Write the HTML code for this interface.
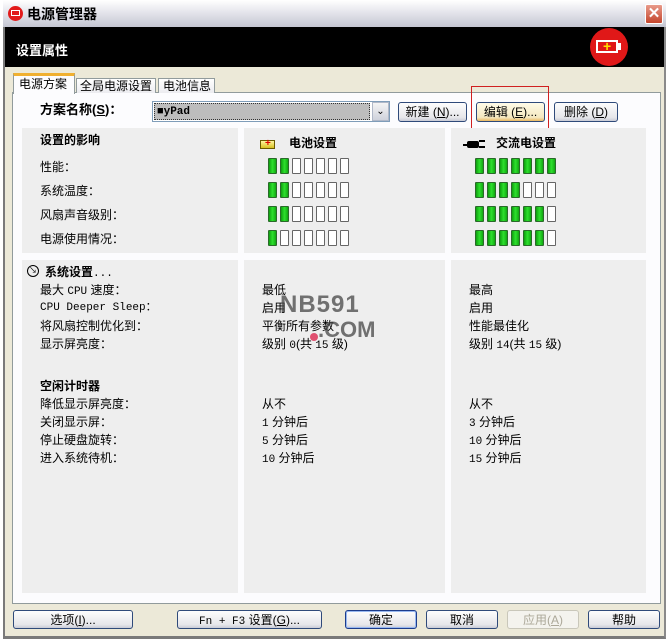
<!DOCTYPE html>
<html><head><meta charset="utf-8"><style>
*{margin:0;padding:0;box-sizing:border-box}
body{width:666px;height:639px;position:relative;overflow:hidden;background:#ece9d8;font-family:"Liberation Sans","Noto Sans CJK SC","WenQuanYi Zen Hei",sans-serif;font-size:12px;color:#000}
.a{position:absolute}
.t{position:absolute;font-size:12px;line-height:14px;white-space:nowrap}
.b{font-weight:bold}
.p{position:absolute;background:#eeeeee}
.btn{position:absolute;height:20px;border:1px solid #2f4a7a;border-radius:3px;background:linear-gradient(#fdfdfd,#e6e6ea 80%,#c9cbd6);text-align:center;line-height:18px;font-size:12px}
.bar{position:absolute;width:9px;height:16px;border:1px solid #666;border-radius:1px;background:#fff}
.g{background:linear-gradient(90deg,#0fa00f,#2ee02e 50%,#11a811);border-color:#2a6a2a}
.mono{font-family:"Liberation Mono","Noto Sans CJK SC",monospace;font-size:11px}
</style></head><body>
<div class="a" style="left:0;top:0;width:666px;height:639px;background:#fff"></div>
<div class="a" style="left:3px;top:0;width:663px;height:639px;background:#ece9d8;border-left:2px solid #7a7a7a;border-right:2px solid #8a8a8a;border-bottom:3px solid #7a7a7a"></div>
<div class="a" style="left:3px;top:0;width:663px;height:27px;background:linear-gradient(#ffffff,#e8e8ee 40%,#c4c6d2)"></div>
<div class="a" style="left:8px;top:6px;width:15px;height:15px;border-radius:50%;background:#e21b1b"></div>
<div class="a" style="left:11px;top:10px;width:9px;height:6px;border:1px solid #fff"></div>
<div class="t b" style="left:27px;top:6px;font-size:14px;line-height:16px">电源管理器</div>
<div class="a" style="left:645px;top:4px;width:18px;height:20px;background:linear-gradient(#e89a8a,#c4452c);border:1px solid #fff;border-radius:2px;color:#fff;font-size:15px;text-align:center;line-height:18px;font-weight:bold">✕</div>
<div class="a" style="left:5px;top:27px;width:659px;height:40px;background:#000"></div>
<div class="t b" style="left:16px;top:44px;color:#fff;font-size:13px">设置属性</div>
<div class="a" style="left:590px;top:28px;width:38px;height:38px;border-radius:50%;background:#e01818"></div>
<div class="a" style="left:596px;top:40px;width:22px;height:13px;border:2px solid #fff"></div>
<div class="a" style="left:618px;top:43px;width:3px;height:7px;background:#fff"></div>
<div class="t b" style="left:603px;top:39px;color:#ffe000;font-size:14px">+</div>
<div class="a" style="left:12px;top:92px;width:649px;height:512px;border:1px solid #919b9c;background:#fcfcfe"></div>
<div class="a" style="left:76px;top:78px;width:80px;height:15px;border:1px solid #919b9c;border-bottom:none;background:linear-gradient(#fff,#ececf0)"></div>
<div class="t" style="left:80px;top:79px">全局电源设置</div>
<div class="a" style="left:158px;top:78px;width:57px;height:15px;border:1px solid #919b9c;border-bottom:none;background:linear-gradient(#fff,#ececf0)"></div>
<div class="t" style="left:163px;top:79px">电池信息</div>
<div class="a" style="left:13px;top:73px;width:62px;height:21px;border:1px solid #919b9c;border-top:3px solid #f0b030;border-bottom:none;background:#fcfcfe"></div>
<div class="t" style="left:19px;top:77px">电源方案</div>
<div class="t b" style="left:40px;top:103px;font-size:13px">方案名称(<u>S</u>)：</div>
<div class="a" style="left:152px;top:101px;width:238px;height:21px;border:1px solid #7f9db9;background:#fff"></div>
<div class="a" style="left:154px;top:103px;width:216px;height:17px;background:#bdbdbd;border:1px dotted #333"></div>
<div class="t b mono" style="left:157px;top:105px">■yPad</div>
<div class="a" style="left:372px;top:102px;width:17px;height:19px;background:linear-gradient(#f4f4f4,#cfd2dc);border:1px solid #b0b8c8;text-align:center;font-size:10px;line-height:17px">⌄</div>
<div class="btn" style="left:398px;top:102px;width:69px">新建 (<u>N</u>)...</div>
<div class="btn" style="left:476px;top:102px;width:69px;background:linear-gradient(#fffbe8,#f4e8c0 80%,#e9b860)">编辑 (<u>E</u>)...</div>
<div class="btn" style="left:554px;top:102px;width:64px">删除 (<u>D</u>)</div>
<div class="a" style="left:471px;top:86px;width:78px;height:46px;border:1px solid #d02020"></div>
<div class="p" style="left:22px;top:128px;width:216px;height:125px"></div>
<div class="p" style="left:244px;top:128px;width:201px;height:125px"></div>
<div class="p" style="left:451px;top:128px;width:195px;height:125px"></div>
<div class="t b" style="left:40px;top:133px">设置的影响</div>
<div class="t" style="left:40px;top:160px">性能：</div>
<div class="t" style="left:40px;top:184px">系统温度：</div>
<div class="t" style="left:40px;top:208px">风扇声音级别：</div>
<div class="t" style="left:40px;top:232px">电源使用情况：</div>
<div class="a" style="left:260px;top:140px;width:15px;height:9px;border:1px solid #6a5a00;background:linear-gradient(#fff7a0,#d8c020)"></div>
<div class="t b" style="left:265px;top:137px;color:#d00;font-size:10px">+</div>
<div class="t b" style="left:289px;top:136px">电池设置</div>
<div class="a" style="left:467px;top:141px;width:12px;height:7px;background:#000;border-radius:2px"></div>
<div class="a" style="left:479px;top:140px;width:6px;height:2px;background:#000"></div>
<div class="a" style="left:479px;top:146px;width:6px;height:2px;background:#000"></div>
<div class="a" style="left:463px;top:144px;width:5px;height:2px;background:#000"></div>
<div class="t b" style="left:496px;top:136px">交流电设置</div>
<div id="bars"></div>
<div class="p" style="left:22px;top:260px;width:216px;height:333px"></div>
<div class="p" style="left:244px;top:260px;width:201px;height:333px"></div>
<div class="p" style="left:451px;top:260px;width:195px;height:333px"></div>
<div class="a" style="left:27px;top:265px;width:12px;height:12px;border:1px solid #000;border-radius:50%;font-size:8px;text-align:center;line-height:10px">↘</div>
<div class="t b" style="left:45px;top:265px">系统设置<span class="mono" style="font-weight:normal">...</span></div>
<div class="t" style="left:40px;top:283px">最大 <span class="mono">CPU</span> 速度：</div>
<div class="t mono" style="left:40px;top:301px">CPU Deeper Sleep：</div>
<div class="t" style="left:40px;top:319px">将风扇控制优化到：</div>
<div class="t" style="left:40px;top:337px">显示屏亮度：</div>
<div class="t b" style="left:40px;top:379px">空闲计时器</div>
<div class="t" style="left:40px;top:397px">降低显示屏亮度：</div>
<div class="t" style="left:40px;top:415px">关闭显示屏：</div>
<div class="t" style="left:40px;top:433px">停止硬盘旋转：</div>
<div class="t" style="left:40px;top:451px">进入系统待机：</div>
<div class="t" style="left:262px;top:283px">最低</div>
<div class="t" style="left:262px;top:301px">启用</div>
<div class="t" style="left:262px;top:319px">平衡所有参数</div>
<div class="t" style="left:262px;top:337px">级别 <span class="mono">0</span>(共 <span class="mono">15</span> 级)</div>
<div class="t" style="left:262px;top:397px">从不</div>
<div class="t" style="left:262px;top:415px"><span class="mono">1</span> 分钟后</div>
<div class="t" style="left:262px;top:433px"><span class="mono">5</span> 分钟后</div>
<div class="t" style="left:262px;top:451px"><span class="mono">10</span> 分钟后</div>
<div class="t" style="left:469px;top:283px">最高</div>
<div class="t" style="left:469px;top:301px">启用</div>
<div class="t" style="left:469px;top:319px">性能最佳化</div>
<div class="t" style="left:469px;top:337px">级别 <span class="mono">14</span>(共 <span class="mono">15</span> 级)</div>
<div class="t" style="left:469px;top:397px">从不</div>
<div class="t" style="left:469px;top:415px"><span class="mono">3</span> 分钟后</div>
<div class="t" style="left:469px;top:433px"><span class="mono">10</span> 分钟后</div>
<div class="t" style="left:469px;top:451px"><span class="mono">15</span> 分钟后</div>
<div class="t b" style="left:280px;top:292px;font-size:24px;line-height:26px;color:rgba(70,70,70,.75);letter-spacing:1px">NB591</div>
<div class="t b" style="left:318px;top:318px;font-size:22px;line-height:24px;color:rgba(70,70,70,.75)">.COM</div>
<div class="a" style="left:310px;top:333px;width:8px;height:8px;border-radius:50%;background:#e05070"></div>
<div class="btn" style="left:13px;top:610px;width:120px;height:19px">选项(<u>I</u>)...</div>
<div class="btn" style="left:177px;top:610px;width:145px;height:19px"><span class="mono">Fn + F3</span> 设置(<u>G</u>)...</div>
<div class="btn" style="left:345px;top:610px;width:72px;height:19px;border-color:#1c3c8c;box-shadow:inset 0 0 0 1px #98b8f0">确定</div>
<div class="btn" style="left:426px;top:610px;width:72px;height:19px">取消</div>
<div class="btn" style="left:507px;top:610px;width:72px;height:19px;border-color:#c9c7ba;background:#f4f3ee;color:#aca899">应用(<u>A</u>)</div>
<div class="btn" style="left:588px;top:610px;width:72px;height:19px">帮助</div>
<script>
var h='';var ys=[158,182,206,230];var bat=[2,2,2,1],ac=[7,4,6,6];
for(var r=0;r<4;r++)for(var i=0;i<7;i++){h+='<div class="bar'+(i<bat[r]?' g':'')+'" style="left:'+(268+i*12)+'px;top:'+ys[r]+'px"></div>';h+='<div class="bar'+(i<ac[r]?' g':'')+'" style="left:'+(475+i*12)+'px;top:'+ys[r]+'px"></div>';}
document.getElementById('bars').innerHTML=h;
</script>
</body></html>
